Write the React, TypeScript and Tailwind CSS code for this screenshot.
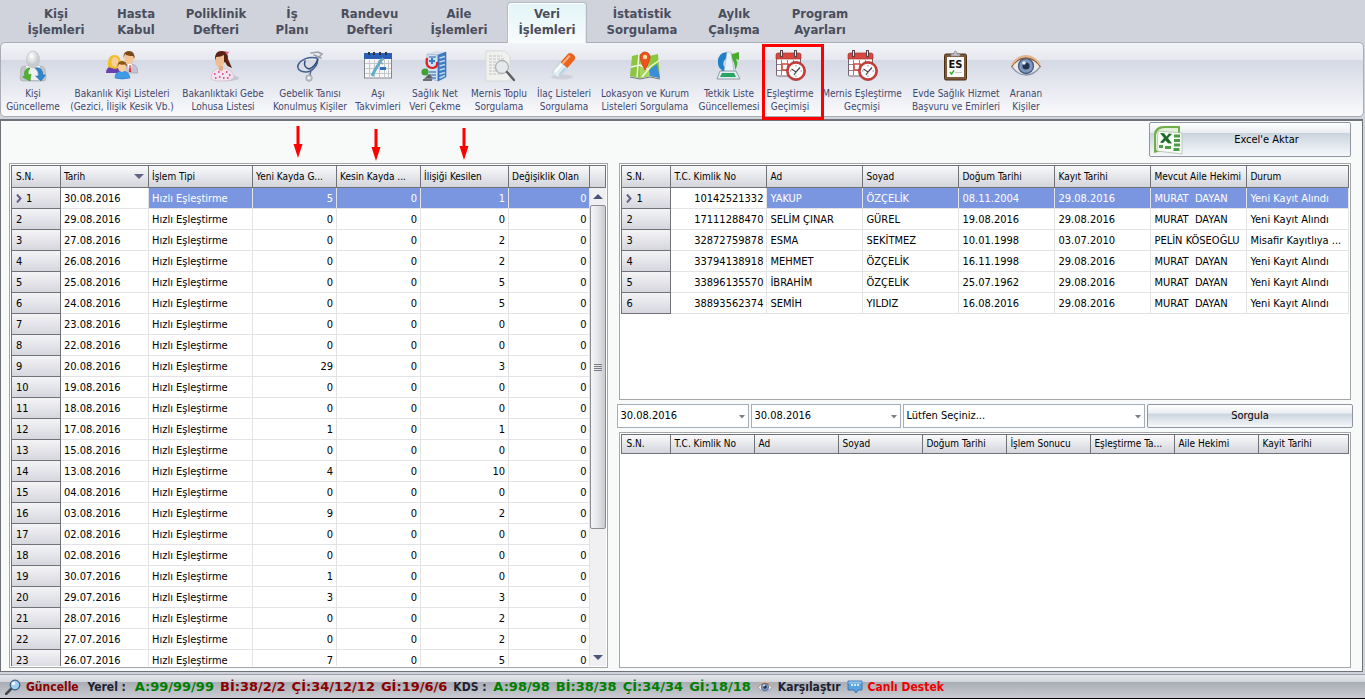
import type { ReactNode } from "react";

const tabs: { lines: [string, string]; width: string; active?: boolean }[] = [
  { lines: ["Kişi", "İşlemleri"], width: "w-[80px]" },
  { lines: ["Hasta", "Kabul"], width: "w-[80px]" },
  { lines: ["Poliklinik", "Defteri"], width: "w-[80px]" },
  { lines: ["İş", "Planı"], width: "w-[72px]" },
  { lines: ["Randevu", "Defteri"], width: "w-[83px]" },
  { lines: ["Aile", "İşlemleri"], width: "w-[96px]" },
  { lines: ["Veri", "İşlemleri"], width: "w-[80px]", active: true },
  { lines: ["İstatistik", "Sorgulama"], width: "w-[110px]" },
  { lines: ["Aylık", "Çalışma"], width: "w-[74px]" },
  { lines: ["Program", "Ayarları"], width: "w-[98px]" },
];

function Svg({ children }: { children: ReactNode }) {
  return (
    <svg viewBox="0 0 32 32" className="size-8 shrink-0" aria-hidden="true">
      {children}
    </svg>
  );
}

function PersonSyncIcon() {
  return (
    <Svg>
      <path d="M4 18Q5 16 9 16H23Q27 16 28 19L29 28Q29 31 26 31H6Q3 31 3 28Z" fill="#c3c6c9" stroke="#a5a8ab" strokeWidth=".6" />
      <path d="M9 16H23L21 30H11Z" fill="#f0f1f2" />
      <ellipse cx="16" cy="9.500" rx="6.500" ry="8.500" fill="url(#headShade)" stroke="#b4b7ba" strokeWidth=".5" />
      <path d="M11 18Q6 21 8 26L5.500 27L13 31L14 24L11.500 25Q10 22 13 18Z" fill="#4fb32b" stroke="#2f8a18" strokeWidth=".5" />
      <path d="M18 18Q25 16 26 25L28.500 25L24 31L18.500 26L21.500 26Q22 21 18 18Z" fill="#2f86cf" stroke="#1765a8" strokeWidth=".5" />
    </Svg>
  );
}

function FamilyIcon() {
  return (
    <Svg>
      <path d="M0 23Q0 16 8 16T15 23Z" fill="#6a3fb0" />
      <path d="M2 17Q1 5 8.500 5T15 17L9 19Z" fill="#f0c02a" />
      <ellipse cx="9" cy="12" rx="3.500" ry="5" fill="#f8cf9c" />
      <path d="M16 23Q16 14 24 14T32 23Z" fill="#c4c3d2" stroke="#8d8ca4" strokeWidth=".5" />
      <path d="M21.500 14L24 23L26 14Z" fill="#fff" />
      <path d="M23.500 15L23 22H25L24.500 15Z" fill="#d9252b" />
      <ellipse cx="23" cy="8" rx="4.800" ry="6" fill="#f5c592" />
      <path d="M17.500 8Q17 1 23 1T28.500 9L27 6Q21 6 19 4Z" fill="#7a4a14" />
      <path d="M9 28Q9 21 16 21T24 28Q16 30 9 28Z" fill="#3f9be6" stroke="#1f6db8" strokeWidth=".5" />
      <ellipse cx="16" cy="17" rx="4" ry="5" fill="#f8cf9c" />
      <path d="M11.500 17Q11 11 16 11T21 17L19 14.500Q15 15 13 14Z" fill="#8c5512" />
    </Svg>
  );
}

function WomanIcon() {
  return (
    <Svg>
      <ellipse cx="21" cy="28" rx="11" ry="3" fill="#b9bcc4" opacity=".7" />
      <path d="M4 28Q4 19 14 18Q25 18 27 27Q26 31 15 31Q4 31 4 28Z" fill="#f3e4ee" stroke="#c9a9be" strokeWidth=".5" />
      <path d="M7 24h1.500M11 22h1.500M15 24h1.500M19 22h1.500M22 25h1.500M8 28h1.500M12 27h1.500M16 28h1.500M20 28h1.500M12 19.500h1.500" stroke="#d62c86" strokeWidth="1.500" />
      <path d="M8 9Q8 1 14 1Q21 0 21 9L25 18L20.500 16L18 12L12 15Z" fill="#5b2212" />
      <path d="M9 7Q14 7 17 5V14Q14 18 11 17Q7 14 9 7Z" fill="#f0bd95" />
      <path d="M12 16h4v4q-2 2-4 0Z" fill="#e5ab82" />
      <path d="M18 1l4 1l-2 3Z" fill="#ee5d9d" />
    </Svg>
  );
}

function StethoscopeIcon() {
  return (
    <Svg>
      <g fill="none" strokeLinecap="round">
        <path d="M23 8Q13 6 6 12Q1 18 7 21Q15 24 20 18Q25 13 23 8Z" stroke="#43608f" strokeWidth="1.600" />
        <path d="M11 11Q9 17 15 19Q21 17 24 9" stroke="#2d4877" strokeWidth="1.400" />
        <path d="M17 20L16 25" stroke="#52688e" strokeWidth="1.400" />
        <path d="M17 3L24 2L28 4L24 8M20 5L27 8" stroke="#9ca1aa" strokeWidth="1.600" />
      </g>
      <circle cx="15" cy="28" r="3.200" fill="#c5cad1" stroke="#8a9099" strokeWidth=".7" />
      <circle cx="15" cy="28" r="1.300" fill="#f6f7f8" />
    </Svg>
  );
}

function VaccineCalendarIcon() {
  return (
    <Svg>
      <rect x="2.500" y="4" width="27" height="24" fill="#f7f7f7" stroke="#85898f" />
      <rect x="2" y="3" width="28" height="6" fill="#2b5fb5" />
      <path d="M3 13.500h26M3 18.500h26M3 23.500h26M7.500 10v18M12.500 10v18M17.500 10v18M22.500 10v18M26.500 10v18" stroke="#c3c7cb" />
      <path d="M7 5v-3M12 5v-3M18 5v-3M24 5v-3" stroke="#30343a" strokeWidth="2" />
      <rect x="18" y="17" width="6" height="3" fill="#2e6fc4" />
      <path d="M20 9L18 12L13 20L10 26" stroke="#61adc9" strokeWidth="3" fill="none" />
      <path d="M16 11L21 14M20 8L22 10" stroke="#8ba9b5" strokeWidth="1.500" />
    </Svg>
  );
}

function HospitalNetIcon() {
  return (
    <Svg>
      <path d="M8 4L17 1L27 2L19 5Z" fill="#d5dfec" />
      <path d="M8 4L19 5V31L8 28Z" fill="#cfe0f3" stroke="#7f9fc6" strokeWidth=".5" />
      <path d="M19 5L27 2V27L19 31Z" fill="#3f7cc6" stroke="#27589a" strokeWidth=".5" />
      <path d="M20.500 8L26 6.500M20.500 12L26 10.500M20.500 16L26 14.500M20.500 20L26 18.500M20.500 24L26 22.500M20.500 28L26 25.500" stroke="#b6d7f4" strokeWidth="1.800" />
      <path d="M10 22h7M10 25h7M10 7h7M10 28h7" stroke="#5c88bd" strokeWidth="1.500" />
      <path d="M8 8Q6 18 14 18Q19 17 18 12" fill="none" stroke="#dd1f26" strokeWidth="2.200" />
      <path d="M10 11h6M13 8v6" stroke="#3a79c7" strokeWidth="2" />
      <circle cx="6" cy="22" r="3.600" fill="#43a035" />
      <path d="M5 29L10 24L14 28Z" fill="#5a5e60" />
      <path d="M4 30h9" stroke="#6d7072" strokeWidth="2" />
    </Svg>
  );
}

function DocumentSearchIcon() {
  return (
    <Svg>
      <path d="M3 1H22L27 6V31H3Z" fill="#f0f0ef" stroke="#d9d9d8" />
      <path d="M6 6h13M6 9h15M6 12h8M6 15h6M6 18h6M6 21h7M6 24h13" stroke="#c2c2c1" strokeDasharray="3 1" />
      <circle cx="19" cy="17" r="6.500" fill="#e4e7ea" fillOpacity=".85" stroke="#aeb1b3" strokeWidth="1.300" />
      <path d="M24 22L31 30" stroke="#5d6062" strokeWidth="2.400" strokeLinecap="round" />
    </Svg>
  );
}

function PillIcon() {
  return (
    <Svg>
      <ellipse cx="14" cy="27" rx="11" ry="2.500" fill="#c3c7d1" opacity=".6" />
      <g transform="rotate(42 16 15)">
        <path d="M11.500 15H20.500V26Q20.500 29 16 29T11.500 26Z" fill="#e2edf3" stroke="#b4c4ce" strokeWidth=".6" />
        <path d="M11.500 15V5Q11.500 1 16 1T20.500 5V15Z" fill="#ea6420" />
        <path d="M14 5V14" stroke="#fbb583" strokeWidth="2" strokeLinecap="round" />
        <path d="M14 17V25" stroke="#fff" strokeWidth="2" strokeLinecap="round" />
        <path d="M19 17V25" stroke="#a9cfe0" strokeWidth="1.500" strokeLinecap="round" />
      </g>
    </Svg>
  );
}

function MapIcon() {
  return (
    <Svg>
      <path d="M3 6L11 4L20 6L29 4L31 28L21 26L11 28L1 26Z" fill="#8cc63e" />
      <path d="M11 4L20 6L21 26L11 28Z" fill="#a5d65a" />
      <path d="M20 20L28 14L31 28L21 26Z" fill="#3b8dd8" />
      <path d="M2 17L11 15L20 20M10 4L8 27M13 27L22 16L31 10" fill="none" stroke="#f2f7e4" strokeWidth="1.500" />
      <path d="M1 27L11 29L21 27L31 29" stroke="#6f7b70" fill="none" />
      <path d="M16 20Q11 11 11 7A5 5 0 0 1 21 7Q21 11 16 20Z" fill="#f0511e" stroke="#b93208" strokeWidth=".6" />
      <circle cx="16" cy="7" r="2.200" fill="#ffe1a8" />
    </Svg>
  );
}

function RefreshScanIcon() {
  return (
    <Svg>
      <path d="M14 2Q4 3 5 13Q5 18 9 20L7 22L14 22L14 15L11.500 17Q8 12 14 8Z" fill="#1f82c8" />
      <path d="M17 8V2L19.500 4L26 2V10L23 9Q26 14 22 20Q22 13 19.500 10Z" fill="#49ab2e" />
      <path d="M14 2H18L21 22H11Z" fill="#e8f1f7" stroke="#a3b6c3" strokeWidth=".6" />
      <path d="M7 21H23L27 29H4Z" fill="#e4ecef" stroke="#768c96" strokeWidth=".8" />
      <path d="M9 23H21L23 27H7Z" fill="#27a462" />
    </Svg>
  );
}

function CalendarClockIcon() {
  return (
    <Svg>
      <rect x="2.500" y="4" width="24" height="22" rx="1" fill="#fff" stroke="#7b6270" />
      <path d="M2 9V5Q2 3 4 3H25Q27 3 27 5V9Z" fill="#d9473f" stroke="#a33531" strokeWidth=".7" />
      <path d="M7.500 10v15M13.500 10v15M19.500 10v15M3 14.500h23M3 20.500h23" stroke="#8c8395" />
      <rect x="8" y="14" width="6" height="6" fill="#fff" stroke="#d9473f" strokeWidth="1.500" />
      <path d="M7.500 1v5M21.500 1v5" stroke="#5b3f46" strokeWidth="3" strokeLinecap="round" />
      <path d="M7.500 1.500v4M21.500 1.500v4" stroke="#f0e7e6" strokeWidth="1" strokeLinecap="round" />
      <circle cx="22" cy="21" r="8.500" fill="#fff" stroke="#c5403a" strokeWidth="2.400" />
      <circle cx="22" cy="21" r="9.600" fill="none" stroke="#8e2a29" strokeWidth=".5" />
      <path d="M22 15v1.500M22 25.500v1.500M16 21h1.500M26.500 21h1.500" stroke="#8c8395" />
      <path d="M17.500 19L22 22L26 17.500M22 22L20 25" fill="none" stroke="#4d4652" strokeWidth="1.300" />
    </Svg>
  );
}

function ClipboardIcon() {
  return (
    <Svg>
      <rect x="4.500" y="4" width="22" height="26" rx="1.500" fill="#7d5836" stroke="#4a2f19" />
      <rect x="7" y="7" width="17" height="20" fill="#fafafa" />
      <path d="M11 6V4H14Q14 1 15.500 1T17 4H20V6Z" fill="#c4c6c9" stroke="#85888c" strokeWidth=".7" />
      <text x="15.500" y="18" textAnchor="middle" fontSize="11" fontWeight="700" fontFamily="DejaVu Sans Condensed, sans-serif" fill="#111">
        ES
      </text>
      <path d="M10 22L11.500 24L14 20.500" fill="none" stroke="#3cab2d" strokeWidth="1.400" />
      <path d="M15 22.500h7" stroke="#c7c9cb" />
    </Svg>
  );
}

function EyeShape() {
  return (
    <>
      <path d="M2 17Q16 1 30 17Q16 29 2 17Z" fill="#efe9e4" />
      <path d="M2 17Q8 25 16 25T30 17" fill="none" stroke="#8f98ab" strokeWidth="1.300" />
      <circle cx="16" cy="16" r="7.500" fill="#7f98bd" stroke="#42587f" strokeWidth="1.300" />
      <circle cx="16" cy="16" r="3.600" fill="#22314f" />
      <circle cx="14" cy="13" r="1.800" fill="#e6effb" />
      <path d="M1.500 17Q7 8 16 8T30.500 17" fill="none" stroke="#8a5a38" strokeWidth="1.300" />
      <path d="M2 14.500Q8 6 16 6T30 14.500" fill="none" stroke="#e3b58e" strokeWidth="2" />
    </>
  );
}

function EyeIcon() {
  return (
    <Svg>
      <EyeShape />
    </Svg>
  );
}

const actions: { lines: [string, string]; width: string; icon: ReactNode; marked?: boolean }[] = [
  { lines: ["Kişi", "Güncelleme"], width: "w-[62px]", icon: <PersonSyncIcon /> },
  { lines: ["Bakanlık Kişi Listeleri", "(Gezici, İlişik Kesik Vb.)"], width: "w-[116px]", icon: <FamilyIcon /> },
  { lines: ["Bakanlıktaki Gebe", "Lohusa Listesi"], width: "w-[86px]", icon: <WomanIcon /> },
  { lines: ["Gebelik Tanısı", "Konulmuş Kişiler"], width: "w-[88px]", icon: <StethoscopeIcon /> },
  { lines: ["Aşı", "Takvimleri"], width: "w-[48px]", icon: <VaccineCalendarIcon /> },
  { lines: ["Sağlık Net", "Veri Çekme"], width: "w-[66px]", icon: <HospitalNetIcon /> },
  { lines: ["Mernis Toplu", "Sorgulama"], width: "w-[62px]", icon: <DocumentSearchIcon /> },
  { lines: ["İlaç Listeleri", "Sorgulama"], width: "w-[68px]", icon: <PillIcon /> },
  { lines: ["Lokasyon ve Kurum", "Listeleri Sorgulama"], width: "w-[94px]", icon: <MapIcon /> },
  { lines: ["Tetkik Liste", "Güncellemesi"], width: "w-[74px]", icon: <RefreshScanIcon /> },
  { lines: ["Eşleştirme", "Geçimişi"], width: "w-[48px]", icon: <CalendarClockIcon />, marked: true },
  { lines: ["Mernis Eşleştirme", "Geçmişi"], width: "w-[96px]", icon: <CalendarClockIcon /> },
  { lines: ["Evde Sağlık Hizmet", "Başvuru ve Emirleri"], width: "w-[92px]", icon: <ClipboardIcon /> },
  { lines: ["Aranan", "Kişiler"], width: "w-[48px]", icon: <EyeIcon /> },
];

type Column = { label: string; width: string; right?: boolean; sorted?: boolean };

const historyColumns: Column[] = [
  { label: "S.N.", width: "w-[50px]" },
  { label: "Tarih", width: "w-[88px]", sorted: true },
  { label: "İşlem Tipi", width: "w-[104px]" },
  { label: "Yeni Kayda G...", width: "w-[84px]", right: true },
  { label: "Kesin Kayda ...", width: "w-[84px]", right: true },
  { label: "İlişiği Kesilen", width: "w-[88px]", right: true },
  { label: "Değişiklik Olan", width: "w-auto", right: true },
];

const history: [string, number, number][] = [
  ["30.08.2016", 5, 1],
  ["29.08.2016", 0, 0],
  ["27.08.2016", 0, 2],
  ["26.08.2016", 0, 2],
  ["25.08.2016", 0, 5],
  ["24.08.2016", 0, 5],
  ["23.08.2016", 0, 0],
  ["22.08.2016", 0, 0],
  ["20.08.2016", 29, 3],
  ["19.08.2016", 0, 0],
  ["18.08.2016", 0, 0],
  ["17.08.2016", 1, 1],
  ["15.08.2016", 0, 0],
  ["13.08.2016", 4, 10],
  ["04.08.2016", 0, 0],
  ["03.08.2016", 9, 2],
  ["02.08.2016", 0, 0],
  ["02.08.2016", 0, 0],
  ["30.07.2016", 1, 0],
  ["29.07.2016", 3, 3],
  ["28.07.2016", 0, 2],
  ["27.07.2016", 0, 2],
  ["26.07.2016", 7, 5],
];

const peopleColumns: Column[] = [
  { label: "S.N.", width: "w-[50px]" },
  { label: "T.C. Kimlik No", width: "w-[96px]", right: true },
  { label: "Ad", width: "w-[96px]" },
  { label: "Soyad", width: "w-[96px]" },
  { label: "Doğum Tarihi", width: "w-[96px]" },
  { label: "Kayıt Tarihi", width: "w-[96px]" },
  { label: "Mevcut Aile Hekimi", width: "w-[96px]" },
  { label: "Durum", width: "w-auto" },
];

const people: string[][] = [
  ["10142521332", "YAKUP", "ÖZÇELİK", "08.11.2004", "29.08.2016", "MURAT  DAYAN", "Yeni Kayıt Alındı"],
  ["17111288470", "SELİM ÇINAR", "GÜREL", "19.08.2016", "29.08.2016", "MURAT  DAYAN", "Yeni Kayıt Alındı"],
  ["32872759878", "ESMA", "SEKİTMEZ", "10.01.1998", "03.07.2010", "PELİN KÖSEOĞLU", "Misafir Kayıtlıya ..."],
  ["33794138918", "MEHMET", "ÖZÇELİK", "16.11.1998", "29.08.2016", "MURAT  DAYAN", "Yeni Kayıt Alındı"],
  ["33896135570", "İBRAHİM", "ÖZÇELİK", "25.07.1962", "29.08.2016", "MURAT  DAYAN", "Yeni Kayıt Alındı"],
  ["38893562374", "SEMİH", "YILDIZ", "16.08.2016", "29.08.2016", "MURAT  DAYAN", "Yeni Kayıt Alındı"],
];

const resultColumns: Column[] = [
  { label: "S.N.", width: "w-[50px]" },
  { label: "T.C. Kimlik No", width: "w-[84px]" },
  { label: "Ad", width: "w-[84px]" },
  { label: "Soyad", width: "w-[84px]" },
  { label: "Doğum Tarihi", width: "w-[84px]" },
  { label: "İşlem Sonucu", width: "w-[84px]" },
  { label: "Eşleştirme Ta...", width: "w-[84px]" },
  { label: "Aile Hekimi", width: "w-[84px]" },
  { label: "Kayit Tarihi", width: "w-auto" },
];

function DataGrid({
  label,
  columns,
  rows,
  compact,
}: {
  label: string;
  columns: Column[];
  rows: (string | number)[][];
  compact?: boolean;
}) {
  return (
    <table aria-label={label} className="w-full table-fixed border-separate border-spacing-0">
      <thead className="text-[10px]">
        <tr className={compact ? "h-[20px]" : "h-[23px]"}>
          {columns.map((c, i) => (
            <th
              key={c.label}
              scope="col"
              className={`${c.width} ${i === 0 ? "border-l pl-[4px]" : "pl-[3px]"} border-y border-r border-[#707278] bg-linear-to-b from-[#fafafb] to-[#d3d5dc] py-0 pr-[2px] text-left font-normal whitespace-nowrap`}
            >
              <span className="flex items-center justify-between">
                <span>{c.label}</span>
                {c.sorted && (
                  <svg viewBox="0 0 10 5" className="mr-[2px] h-[5px] w-[10px] shrink-0" aria-hidden="true">
                    <path d="M0 0H10L5 5Z" fill="#62628c" />
                  </svg>
                )}
              </span>
            </th>
          ))}
        </tr>
      </thead>
      <tbody>
        {rows.map((row, r) => (
          <tr key={r} className="h-[21px]">
            <th
              scope="row"
              className="border-x border-b border-[#707278] bg-linear-to-b from-[#f4f4f6] to-[#d6d7de] px-[4px] py-0 text-left font-normal"
            >
              <span className="flex items-center gap-[4px]">
                {r === 0 && (
                  <svg viewBox="0 0 6 9" className="h-[9px] w-[6px]" aria-hidden="true">
                    <path d="M1 0.500L4.500 4.500L1 8.500" fill="none" stroke="#62628c" strokeWidth="2" />
                  </svg>
                )}
                {r + 1}
              </span>
            </th>
            {row.map((cell, i) => (
              <td
                key={i}
                className={`border-r border-b border-[#e3e3e6] px-[3px] py-0 whitespace-pre ${
                  columns[i + 1].right ? "text-right" : ""
                } ${r === 0 && i > 0 ? "bg-[#7b96e0] text-white" : ""}`}
              >
                {cell}
              </td>
            ))}
          </tr>
        ))}
      </tbody>
    </table>
  );
}

function ScrollBar() {
  return (
    <div className="flex w-[16px] shrink-0 flex-col bg-[#f0f0f2]">
      <div className="h-[23px] shrink-0 border-y border-r border-[#707278] bg-linear-to-b from-[#fafafb] to-[#d3d5dc]" />
      <button aria-label="Yukarı kaydır" className="flex h-[17px] shrink-0 items-center justify-center">
        <svg viewBox="0 0 10 5" className="h-[5px] w-[10px]" aria-hidden="true">
          <path d="M0 5H10L5 0Z" fill="#4a5578" />
        </svg>
      </button>
      <div className="flex min-h-0 flex-1 flex-col">
        <div className="flex h-[73%] flex-col items-center justify-center gap-px rounded-[2px] border border-[#8b8e94] bg-linear-to-r from-[#f6f6f7] via-[#e4e5e8] to-[#c8cad0]">
          <span className="h-px w-[8px] bg-[#7a7d85]" />
          <span className="h-px w-[8px] bg-[#7a7d85]" />
          <span className="h-px w-[8px] bg-[#7a7d85]" />
          <span className="h-px w-[8px] bg-[#7a7d85]" />
        </div>
      </div>
      <button aria-label="Aşağı kaydır" className="flex h-[17px] shrink-0 items-center justify-center">
        <svg viewBox="0 0 10 5" className="h-[5px] w-[10px]" aria-hidden="true">
          <path d="M0 0H10L5 5Z" fill="#4a5578" />
        </svg>
      </button>
    </div>
  );
}

function DropDown({ label, value, width }: { label: string; value: string; width: string }) {
  return (
    <div className={`relative flex ${width}`}>
      <select
        aria-label={label}
        className="h-[24px] w-full appearance-none border border-[#a3aebb] bg-white pr-[16px] pl-[2px] text-black outline-none"
      >
        <option>{value}</option>
      </select>
      <svg viewBox="0 0 6 4" className="pointer-events-none absolute top-[11px] right-[4px] h-[4px] w-[6px]" aria-hidden="true">
        <path d="M0 0H6L3 3.500Z" fill="#7b7d80" />
      </svg>
    </div>
  );
}

function RedArrow({ place }: { place: string }) {
  return (
    <svg viewBox="0 0 10 32" className={`absolute h-[32px] w-[10px] ${place}`} aria-hidden="true">
      <path d="M3.500 0H6.500V18H9.500L5 32L0.500 18H3.500Z" fill="#fe0000" />
    </svg>
  );
}

function ExcelIcon() {
  return (
    <svg viewBox="0 0 30 30" className="size-[30px] shrink-0" aria-hidden="true">
      <path d="M1 28V9Q2 1 11 1H27V24Q14 24 1 28Z" fill="#6fae4b" />
      <path d="M3 25V10Q4 3 12 3H25V24Z" fill="#e4f1d9" />
      <path d="M5 6L29 8V29L4 26Z" fill="#f7faf5" stroke="#a9b8a2" strokeWidth=".7" />
      <path d="M7 8L11 8.300L13.500 11.500L16 8.600L19 9L15 13L19 18.500L15 18.200L12.500 15.500L10 18L7 17.600L11 13Z" fill="#1f6b2b" />
      <path d="M21 11h6M21 15.500h6M21 20h6M6 21.500h4M12 22.500h6M20.500 24.500h6" stroke="#4c9b45" strokeWidth="3" />
    </svg>
  );
}

const localStats: [string, string][] = [
  ["A:99/99/99", "text-[#008000]"],
  ["Bİ:38/2/2", "text-[#8b0000]"],
  ["Çİ:34/12/12", "text-[#8b0000]"],
  ["Gİ:19/6/6", "text-[#8b0000]"],
];

const kdsStats = ["A:98/98", "Bİ:38/38", "Çİ:34/34", "Gİ:18/18"];

export default function App() {
  return (
    <div className="flex h-screen min-h-[480px] flex-col overflow-hidden bg-[#d0d3dc] font-['DejaVu_Sans_Condensed','DejaVu_Sans',sans-serif] text-[11px] leading-[13px] text-black">
      <svg width="0" height="0" className="absolute" aria-hidden="true">
        <defs>
          <radialGradient id="headShade" cx=".4" cy=".3">
            <stop offset="0" stopColor="#fff" />
            <stop offset="1" stopColor="#c9cccf" />
          </radialGradient>
        </defs>
      </svg>

      <nav aria-label="Ana menü" className="flex h-[42px] shrink-0 pl-[16px] text-[13px] leading-[16px] font-bold text-[#4a4e5c]">
        {tabs.map((t) => (
          <button
            key={t.lines.join(" ")}
            aria-current={t.active ? "page" : undefined}
            className={`${t.width} flex shrink-0 flex-col items-center whitespace-nowrap ${
              t.active
                ? "relative z-10 mt-[2px] -mb-px rounded-t-[4px] border border-b-0 border-[#b4b9c4] bg-linear-to-b from-[#e2f5f8] to-[#f8fbfc] pt-[3px] shadow-[inset_1px_1px_0_#fff,inset_-1px_0_0_#c9f3f6]"
                : "pt-[6px]"
            }`}
          >
            <span>{t.lines[0]}</span>
            <span>{t.lines[1]}</span>
          </button>
        ))}
      </nav>

      <section
        aria-label="Veri İşlemleri"
        className="mr-px flex h-[75px] shrink-0 rounded-[5px] border border-[#aaadb5] bg-[linear-gradient(#f3f4f8,#e6e8ef_23%,#d5d9e5_24%,#fafafb)] pl-px text-[10px] text-[#3f4870]"
      >
        {actions.map((a) => (
          <button key={a.lines.join(" ")} className={`${a.width} relative flex shrink-0 flex-col items-center pt-[7px] whitespace-nowrap`}>
            {a.icon}
            <span className="mt-[5px]">{a.lines[0]}</span>
            <span>{a.lines[1]}</span>
            {a.marked && <span className="absolute top-px -left-[4px] z-10 h-[76px] w-[62px] border-[3px] border-[#fe0000]" />}
          </button>
        ))}
      </section>

      <main className="mt-[2px] mr-[2px] flex min-h-0 flex-1 flex-col border border-t-2 border-[#6f7278] bg-[#f8faf9] pr-[9px] pb-[3px] pl-[8px]">
        <div className="relative flex h-[42px] shrink-0 justify-end pt-px pr-[2px]">
          <RedArrow place="top-[5px] left-[284px]" />
          <RedArrow place="top-[8px] left-[362px]" />
          <RedArrow place="top-[7px] left-[450px]" />
          <button className="flex h-[35px] w-[202px] items-center rounded-[2px] border border-[#8f95a3] bg-[linear-gradient(#ffffff,#e9ecf1_30%,#cad4de_31%,#f6f8fa)] pl-[3px]">
            <ExcelIcon />
            <span className="flex-1 text-center">Excel'e Aktar</span>
          </button>
        </div>

        <div className="grid min-h-0 flex-1 grid-cols-[minmax(0,599fr)_minmax(0,735fr)] gap-[9px]">
          <div className="flex min-h-0 overflow-hidden border border-[#a3a7a8] bg-white p-px">
            <div className="min-w-0 flex-1 overflow-hidden">
              <DataGrid
                label="Eşleştirme geçmişi"
                columns={historyColumns}
                rows={history.map(([date, added, removed]) => [date, "Hızlı Eşleştirme", added, 0, removed, 0])}
              />
            </div>
            <ScrollBar />
          </div>

          <div className="flex min-h-0 flex-col gap-[4px]">
            <div className="mx-[2px] min-h-0 flex-1 overflow-hidden border border-[#a3a7a8] bg-white p-px">
              <DataGrid label="Kişiler" columns={peopleColumns} rows={people} />
            </div>
            <form className="flex h-[24px] shrink-0 gap-[2px]" onSubmit={(e) => e.preventDefault()}>
              <DropDown label="Başlangıç tarihi" value="30.08.2016" width="w-[132px]" />
              <DropDown label="Bitiş tarihi" value="30.08.2016" width="w-[150px]" />
              <DropDown label="İşlem sonucu" value="Lütfen Seçiniz..." width="flex-1" />
              <button className="h-[24px] w-[206px] rounded-[2px] border border-[#8f95a3] bg-[linear-gradient(#ffffff,#e9ecf1_38%,#cad4de_40%,#f6f8fa)]">
                Sorgula
              </button>
            </form>
            <div className="mx-[2px] min-h-0 flex-1 overflow-hidden border border-[#a3a7a8] bg-white p-px">
              <DataGrid label="Sorgu sonuçları" columns={resultColumns} rows={[]} compact />
            </div>
          </div>
        </div>
      </main>

      <footer className="mt-[2px] flex h-[25px] shrink-0 items-center gap-[6px] border-t border-b border-t-[#9a9da5] border-b-black bg-[linear-gradient(#e6e7ec,#d3d5dc_30%,#a9adb5_31%,#cbccd3)] pl-[5px] text-[12px] leading-[16px] font-bold whitespace-nowrap text-[#1e2230]">
        <button className="flex items-center gap-[5px] text-[#8b0000]">
          <svg viewBox="0 0 16 16" className="size-[16px]" aria-hidden="true">
            <path d="M1 15L6 10" stroke="#444850" strokeWidth="2.500" strokeLinecap="round" />
            <circle cx="10" cy="6" r="4.800" fill="#9fd0f2" stroke="#3d5d80" strokeWidth="1.200" />
            <circle cx="8.500" cy="4.500" r="1.800" fill="#e6f5ff" />
          </svg>
          Güncelle
        </button>
        <span className="w-[44px] text-center">Yerel :</span>
        {localStats.map(([text, colour]) => (
          <span key={text} className={`font-['DejaVu_Sans',sans-serif] text-[13px] ${colour}`}>
            {text}
          </span>
        ))}
        <span className="w-[34px]">KDS :</span>
        {kdsStats.map((text) => (
          <span key={text} className="font-['DejaVu_Sans',sans-serif] text-[13px] text-[#008000]">
            {text}
          </span>
        ))}
        <button className="flex items-center gap-[5px]">
          <svg viewBox="0 0 32 32" className="size-[16px]" aria-hidden="true">
            <EyeShape />
          </svg>
          Karşılaştır
        </button>
        <button className="flex items-center gap-[5px] text-[#f00000]">
          <svg viewBox="0 0 16 16" className="size-[16px]" aria-hidden="true">
            <path d="M1 2H15V11H11L9 14L7 11H1Z" fill="#5ba3df" stroke="#2c6ca8" strokeWidth=".8" />
            <path d="M4 6h2M7 6h2M10 6h2" stroke="#fff" strokeWidth="1.500" />
            <path d="M1.500 2.500h13v2h-13Z" fill="#a9d3f5" opacity=".7" />
          </svg>
          Canlı Destek
        </button>
      </footer>
    </div>
  );
}
